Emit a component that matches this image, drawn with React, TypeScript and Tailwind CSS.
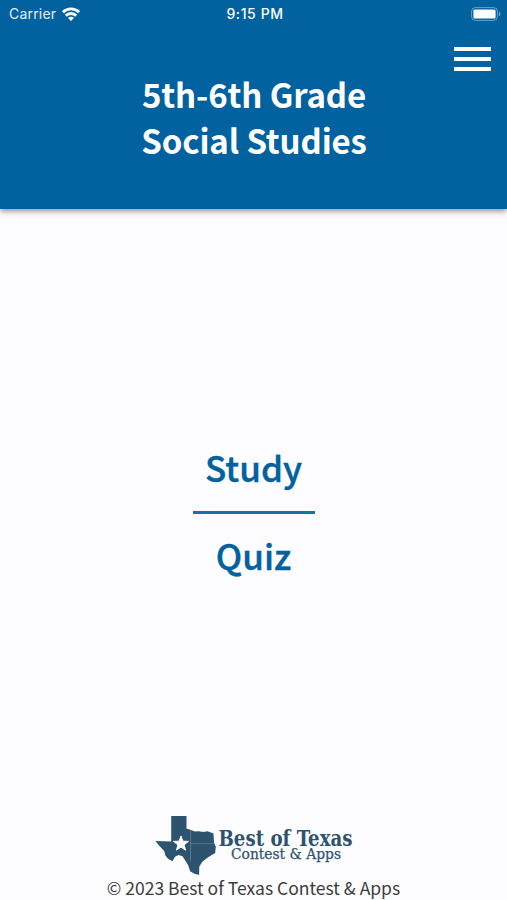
const links = ['Study', 'Quiz'];

function WifiIcon() {
  return (
    <svg width="18" height="14" viewBox="0 0 18 14" fill="none" stroke="white" strokeWidth="2.9">
      <path d="M0.9 5.2a11.6 11.6 0 0 1 16.2 0" />
      <path d="M3.8 8.6a7.4 7.4 0 0 1 10.4 0" />
      <path d="M9 14L6 11a4.2 4.2 0 0 1 6 0z" fill="white" stroke="none" />
    </svg>
  );
}

function BatteryIcon() {
  return (
    <svg width="30" height="14" viewBox="0 0 30 14" fill="none">
      <rect x="0.6" y="0.6" width="25.8" height="12.8" rx="3.8" stroke="white" strokeOpacity="0.4" />
      <rect x="2.4" y="2.4" width="22.2" height="9.2" rx="1.5" fill="white" />
      <path d="M28 4.8c1.9.7 1.9 3.7 0 4.4z" fill="white" fillOpacity="0.45" />
    </svg>
  );
}

function StatusBar() {
  return (
    <div className="grid h-[27px] grid-cols-3 items-center pl-[9px] pr-[6px] font-['Inter','Liberation_Sans',sans-serif] text-[14px] text-white">
      <div className="flex items-center gap-[6px]">
        <span className="tracking-[0.2px] text-white/90">Carrier</span>
        <WifiIcon />
      </div>
      <span className="text-center font-medium tracking-[0.6px]">9:15 PM</span>
      <div className="flex justify-end">
        <BatteryIcon />
      </div>
    </div>
  );
}

function TexasIcon() {
  return (
    <svg width="62" height="62" viewBox="0 0 62 62" fill="#2d536f" className="shrink-0">
      <path d="M17.2 2h15.300v12.500l5 1.800 3.500 1.200 4-.3 4 .8 4.500-.7 6 2.200.5 9.500 1.800 3.500-.6 6.500-6.700 4-6 4.500-3.200 5-.2 8.500-4.600-1.300-4.400-2.400-2-6.300-5.600-8.800-4-1.200-3.500 1.800-2.600 4.500-4.400-2.500-2.600-3.400-1.200-4.500-5.200-5.400-3.500-4.500 15.700.5z" />
      <path d="M36.500 16.500v30M36.500 29.700h24.500" stroke="#5f7f95" strokeWidth="0.8" />
      <path d="M27 22l1.900 5.200 5.600.2-4.400 3.400 1.500 5.400-4.600-3.100-4.600 3.100 1.500-5.400-4.400-3.400 5.600-.2z" fill="white" stroke="white" />
    </svg>
  );
}

function Logo() {
  return (
    <div className="flex h-[62px] w-[200px] gap-[1px] text-[#2d536f]">
      <TexasIcon />
      <div className="flex flex-col pt-[10px] font-['DejaVu_Serif',serif]">
        <svg width="138" height="24" className="overflow-visible" fill="currentColor">
          <text x="1.5" y="22" textLength="134" lengthAdjust="spacingAndGlyphs" className="text-[21.5px] font-bold">
            Best of Texas
          </text>
        </svg>
        <svg width="138" height="20" className="overflow-visible" fill="currentColor" stroke="currentColor" strokeWidth="0.25">
          <text x="14" y="11" textLength="110" lengthAdjust="spacingAndGlyphs" className="text-[14.5px]">
            Contest &amp; Apps
          </text>
        </svg>
      </div>
    </div>
  );
}

export default function App() {
  return (
    <div className="flex h-[900px] w-[507px] flex-col overflow-hidden bg-[#fdfdff] font-['Noto_Sans_CJK_SC',sans-serif]">
      <header className="h-[209px] shrink-0 bg-[#01629f] shadow-[0_2px_6px_rgba(0,0,0,0.45)]">
        <StatusBar />
        <div className="flex justify-end pr-4 pt-5">
          <button aria-label="Menu" className="flex flex-col gap-[6px]">
            <span className="h-1 w-[37px] bg-white" />
            <span className="h-1 w-[37px] bg-white" />
            <span className="h-1 w-[37px] bg-white" />
          </button>
        </div>
        <h1 className="pl-px text-center text-[33px] font-bold leading-[46px] tracking-[-0.12px] text-white">
          5th-6th Grade
          <br />
          Social Studies
        </h1>
      </header>

      <main className="flex flex-1 flex-col items-center pt-[236px] text-[35px] font-medium leading-[44px] text-[#01629f] [-webkit-text-stroke:0.4px_#01629f]">
        <a href="#study">{links[0]}</a>
        <hr className="mb-[19px] mt-[22px] h-[3px] w-[122px] border-0 bg-[#1671a8]" />
        <a href="#quiz">{links[1]}</a>
      </main>

      <footer className="flex flex-col items-center">
        <Logo />
        <p className="pb-px text-[17.5px] leading-[23px] text-[#3b3b3d]">© 2023 Best of Texas Contest &amp; Apps</p>
      </footer>
    </div>
  );
}
